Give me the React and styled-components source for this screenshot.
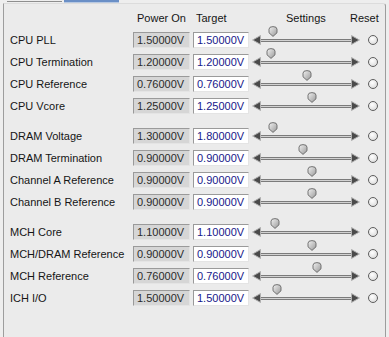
import React from 'react';
import styled, { createGlobalStyle } from 'styled-components';

const GlobalStyle = createGlobalStyle`
  html, body {
    margin: 0;
    padding: 0;
    background: #eeeeee;
    font-family: "Liberation Sans", Arial, sans-serif;
    font-size: 11px;
    color: #151515;
  }
`;

const Page = styled.div`
  width: 389px;
  height: 337px;
  overflow: hidden;
  display: flex;
  flex-direction: column;
`;

const TabStrip = styled.div`
  height: 3px;
  display: flex;
  align-items: flex-start;
  flex-shrink: 0;
`;

const Tab = styled.div`
  margin-left: ${({ $offset }) => $offset}px;
  width: ${({ $w }) => $w}px;
  height: ${({ $active }) => ($active ? 3 : 2)}px;
  background: ${({ $active }) => ($active ? '#6a8fc6' : '#eeeeee')};
  border-bottom: 1px solid ${({ $active }) => ($active ? '#b8c9e2' : '#8e8e8e')};
  box-sizing: border-box;
`;

const Panel = styled.div`
  flex: 1;
  margin: 0 3px;
  background: #ebebeb;
  border: 1px solid #9d9d9d;
  border-top-color: #dcdcdc;
  border-bottom: none;
  border-top-right-radius: 3px;
  padding: 2px 0 0 6px;
`;

const Row = styled.div`
  height: ${({ $h }) => $h || 22}px;
  display: flex;
  align-items: center;
  margin-top: ${({ $gap }) => ($gap ? 8 : 0)}px;
`;

const Label = styled.div`
  width: 123px;
  white-space: nowrap;
`;

const HeadCell = styled.div`
  width: ${({ $w }) => $w}px;
  padding-left: ${({ $pad }) => $pad || 0}px;
  margin-left: ${({ $ml }) => $ml || 0}px;
  box-sizing: border-box;
  white-space: nowrap;
`;

const ValueBox = styled.div`
  width: ${({ $w }) => $w}px;
  height: 16px;
  box-sizing: border-box;
  margin-left: ${({ $ml }) => $ml || 0}px;
  padding: 0 0 0 3px;
  line-height: 15px;
  border: 1px solid;
  border-color: #9a9a9a #e4e4e4 #e4e4e4 #9a9a9a;
  background: ${({ $editable }) => ($editable ? '#ffffff' : '#d6d6d6')};
  color: ${({ $editable }) => ($editable ? '#17178a' : '#2a2a2a')};
`;

const Slider = styled.div`
  position: relative;
  width: 108px;
  height: 22px;
  margin-left: 3px;
  display: flex;
  align-items: center;
`;

const Track = styled.div`
  flex: 1;
  height: 3px;
  box-sizing: border-box;
  border-top: 1px solid #7b7b7b;
  border-bottom: 1px solid #7b7b7b;
  background: #d2d2d2;
`;

const Thumb = styled.svg`
  position: absolute;
  top: -3px;
`;

const Radio = styled.div`
  width: 10px;
  height: 10px;
  margin-left: 8px;
  border-radius: 50%;
  box-sizing: border-box;
  border: 1px solid #5e5e5e;
  background: radial-gradient(circle at 40% 35%, #ffffff, #d4d4d4);
`;

const Arrow = ({ dir }) => (
  <svg width="9" height="10" viewBox="0 0 9 10">
    <polygon
      points={dir === 'left' ? '8.5,0.6 0.6,5 8.5,9.4' : '0.5,0.6 8.4,5 0.5,9.4'}
      fill="#4a4a4a"
      stroke="#b0b0b0"
      strokeWidth="1"
    />
  </svg>
);

const rows = [
  { name: 'CPU PLL', power: '1.50000V', target: '1.50000V', thumb: 273 },
  { name: 'CPU Termination', power: '1.20000V', target: '1.20000V', thumb: 271 },
  { name: 'CPU Reference', power: '0.76000V', target: '0.76000V', thumb: 307 },
  { name: 'CPU Vcore', power: '1.25000V', target: '1.25000V', thumb: 312 },
  { name: 'DRAM Voltage', power: '1.30000V', target: '1.80000V', thumb: 273, gap: true },
  { name: 'DRAM Termination', power: '0.90000V', target: '0.90000V', thumb: 303 },
  { name: 'Channel A Reference', power: '0.90000V', target: '0.90000V', thumb: 312 },
  { name: 'Channel B Reference', power: '0.90000V', target: '0.90000V', thumb: 312 },
  { name: 'MCH Core', power: '1.10000V', target: '1.10000V', thumb: 275, gap: true },
  { name: 'MCH/DRAM Reference', power: '0.90000V', target: '0.90000V', thumb: 312 },
  { name: 'MCH Reference', power: '0.76000V', target: '0.76000V', thumb: 317 },
  { name: 'ICH I/O', power: '1.50000V', target: '1.50000V', thumb: 277 },
];

// slider starts at x=252 on the page
const SLIDER_X = 252;

const VoltageRow = ({ row }) => (
  <Row $gap={row.gap}>
    <Label>{row.name}</Label>
    <ValueBox $w={57}>{row.power}</ValueBox>
    <ValueBox $w={56} $ml={3} $editable>{row.target}</ValueBox>
    <Slider>
      <Arrow dir="left" />
      <Track />
      <Arrow dir="right" />
      <Thumb width="10" height="11" viewBox="0 0 10 11" style={{ left: row.thumb - SLIDER_X - 5 }}>
        <defs>
          <linearGradient id="tg" x1="0" y1="0" x2="1" y2="1">
            <stop offset="0" stopColor="#f2f2f2" />
            <stop offset="1" stopColor="#979797" />
          </linearGradient>
        </defs>
        <path d="M1 3.2 Q1 0.6 5 0.6 Q9 0.6 9 3.2 L9 6.8 L5 10.4 L1 6.8 Z" fill="url(#tg)" stroke="#666666" strokeWidth="0.9" />
      </Thumb>
    </Slider>
    <Radio />
  </Row>
);

const App = () => (
  <Page>
    <GlobalStyle />
    <TabStrip>
      <Tab $offset={7} $w={55} />
      <Tab $offset={2} $w={55} $active />
    </TabStrip>
    <Panel>
      <Row $h={23}>
        <Label />
        <HeadCell $w={57} $pad={4}>Power On</HeadCell>
        <HeadCell $w={56} $ml={3} $pad={3}>Target</HeadCell>
        <HeadCell $w={98} $ml={3} $pad={34}>Settings</HeadCell>
        <HeadCell $w={34}>Reset</HeadCell>
      </Row>
      {rows.map((r) => (
        <VoltageRow key={r.name} row={r} />
      ))}
    </Panel>
  </Page>
);

export default App;
